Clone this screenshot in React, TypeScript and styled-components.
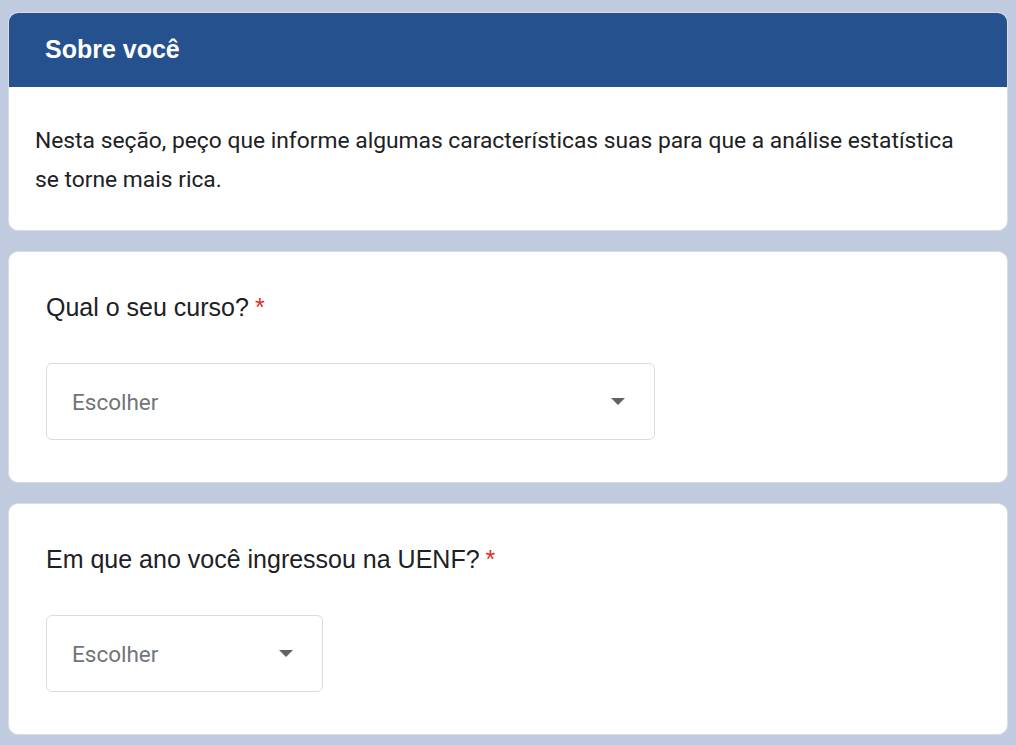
import React from 'react';
import styled, { createGlobalStyle } from 'styled-components';

const GlobalStyle = createGlobalStyle`
  html, body {
    margin: 0;
    padding: 0;
    background-color: #c0cbdf;
  }
`;

const Page = styled.div`
  display: flex;
  flex-direction: column;
  gap: 20px;
  padding: 12px 8px 8px 8px;
  min-height: 745px;
  box-sizing: border-box;
`;

const Card = styled.div`
  background-color: #ffffff;
  border: 1px solid #dadce0;
  border-radius: 10px;
  overflow: hidden;
`;

const SectionHeader = styled.div`
  background-color: #25528f;
  height: 75px;
  display: flex;
  align-items: center;
  padding: 0 37px;
  margin: -1px -1px 0 -1px;
`;

const SectionTitle = styled.h1`
  margin: 0;
  font-family: 'Liberation Sans', Arial, sans-serif;
  font-size: 25px;
  font-weight: 700;
  color: #ffffff;
`;

const Description = styled.p`
  margin: 0;
  padding: 34px 26px 31px 26px;
  font-family: Roboto, 'Noto Sans', sans-serif;
  font-size: 22.8px;
  line-height: 39px;
  color: #202124;
`;

const QuestionBody = styled.div`
  padding: 38px 37px 42px 37px;
  display: flex;
  flex-direction: column;
  gap: 39px;
`;

const QuestionTitle = styled.div`
  font-family: 'Liberation Sans', Arial, sans-serif;
  font-size: 25px;
  line-height: 34px;
  color: #202124;
`;

const Required = styled.span`
  color: #d93025;
  margin-left: 6px;
`;

const Dropdown = styled.div<{ $width: number }>`
  width: ${(p) => p.$width}px;
  height: 77px;
  box-sizing: border-box;
  border: 1px solid #dadce0;
  border-radius: 6px;
  display: flex;
  align-items: center;
  justify-content: space-between;
  padding: 0 29px 0 25px;
`;

const Placeholder = styled.span`
  font-family: Roboto, 'Noto Sans', sans-serif;
  font-size: 22.5px;
  color: #70757a;
`;

const Arrow = () => (
  <svg width="14" height="7" viewBox="0 0 14 7">
    <path d="M0 0 L14 0 L7 7 Z" fill="#5f6368" />
  </svg>
);

const Question = ({ title, width }: { title: string; width: number }) => (
  <Card>
    <QuestionBody>
      <QuestionTitle>
        {title}
        <Required>*</Required>
      </QuestionTitle>
      <Dropdown $width={width}>
        <Placeholder>Escolher</Placeholder>
        <Arrow />
      </Dropdown>
    </QuestionBody>
  </Card>
);

export default function App() {
  return (
    <>
      <GlobalStyle />
      <Page>
        <Card>
          <SectionHeader>
            <SectionTitle>Sobre você</SectionTitle>
          </SectionHeader>
          <Description>
            Nesta seção, peço que informe algumas características suas para que a análise estatística
            se torne mais rica.
          </Description>
        </Card>
        <Question title="Qual o seu curso?" width={609} />
        <Question title="Em que ano você ingressou na UENF?" width={277} />
      </Page>
    </>
  );
}
